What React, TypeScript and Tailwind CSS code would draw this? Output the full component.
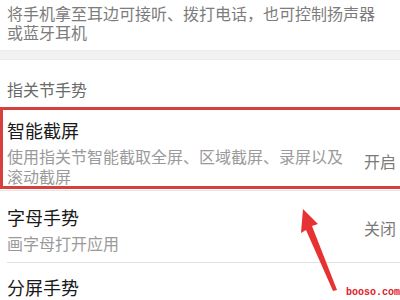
import React from "react";

const cjk = { fontFamily: '"Noto Sans CJK SC", "Noto Sans", sans-serif' };

function Row({ title, desc, state, stateTop, pad }: { title: string; desc: string; state: string; stateTop: string; pad: string }) {
  return (
    <div className="flex">
      <div className={pad}>
        <div className="text-[18px] leading-[22px] text-[#1a1a1a]">{title}</div>
        <div className="mt-[5px] w-[338px] text-[16px] leading-[20px] text-[#9a9a9a]">{desc}</div>
      </div>
      <div className={`ml-auto pr-[4px] text-[16px] leading-[20px] text-[#7a7a7a] ${stateTop}`}>{state}</div>
    </div>
  );
}

export default function App() {
  return (
    <div className="relative w-[400px] h-[300px] overflow-hidden bg-white" style={cjk}>
      {/* top description */}
      <div className="px-[7px] pt-[4px] pb-[8px] text-[16px] leading-[19px] text-[#7c7c7c]">
        <div>将手机拿至耳边可接听、拨打电话，也可控制扬声器</div>
        <div>或蓝牙耳机</div>
      </div>
      <div className="h-[10px] bg-[#f2f2f2] border-y border-[#ececec]" />

      {/* section header */}
      <div className="px-[7px] pt-[19px] pb-[8px] text-[16px] leading-[20px] text-[#6a6a6a]">指关节手势</div>

      {/* highlighted row */}
      <div className="border-y-[3px] border-l-[3px] border-[#d8403e] pt-[9px]">
        <Row
          title="智能截屏"
          desc="使用指关节智能截取全屏、区域截屏、录屏以及滚动截屏"
          state="开启"
          stateTop="mt-[32px]"
          pad="pl-[4px]"
        />
      </div>
      <div className="h-px mt-[1px] bg-[#e6e6e6]" />

      {/* letter gesture */}
      <div className="pt-[15px] pb-[9px]">
        <Row title="字母手势" desc="画字母打开应用" state="关闭" stateTop="mt-[12px]" pad="pl-[7px]" />
      </div>
      <div className="ml-[7px] h-px bg-[#e2e2e2]" />

      {/* split screen */}
      <div className="pt-[13px]">
        <div className="flex">
          <div className="pl-[7px] text-[18px] leading-[22px] text-[#1a1a1a]">分屏手势</div>
          <div className="ml-auto pr-[4px] mt-[22px] text-[16px] leading-[20px] text-[#7a7a7a]">开启</div>
        </div>
      </div>

      {/* red arrow */}
      <svg className="absolute left-0 top-0 pointer-events-none" width="400" height="300" viewBox="0 0 400 300">
        <polygon
          points="303,209 318,224 312,226 337,290 333,291 306,230 301,233"
          fill="#e63232"
        />
      </svg>

      {/* watermark */}
      <div
        className="absolute left-[346px] top-[287px] bg-white/70 text-[10px] leading-[11px] font-bold text-[#e0201e]"
        style={{ fontFamily: '"Liberation Mono", monospace' }}
      >
        booso.com
      </div>
    </div>
  );
}
